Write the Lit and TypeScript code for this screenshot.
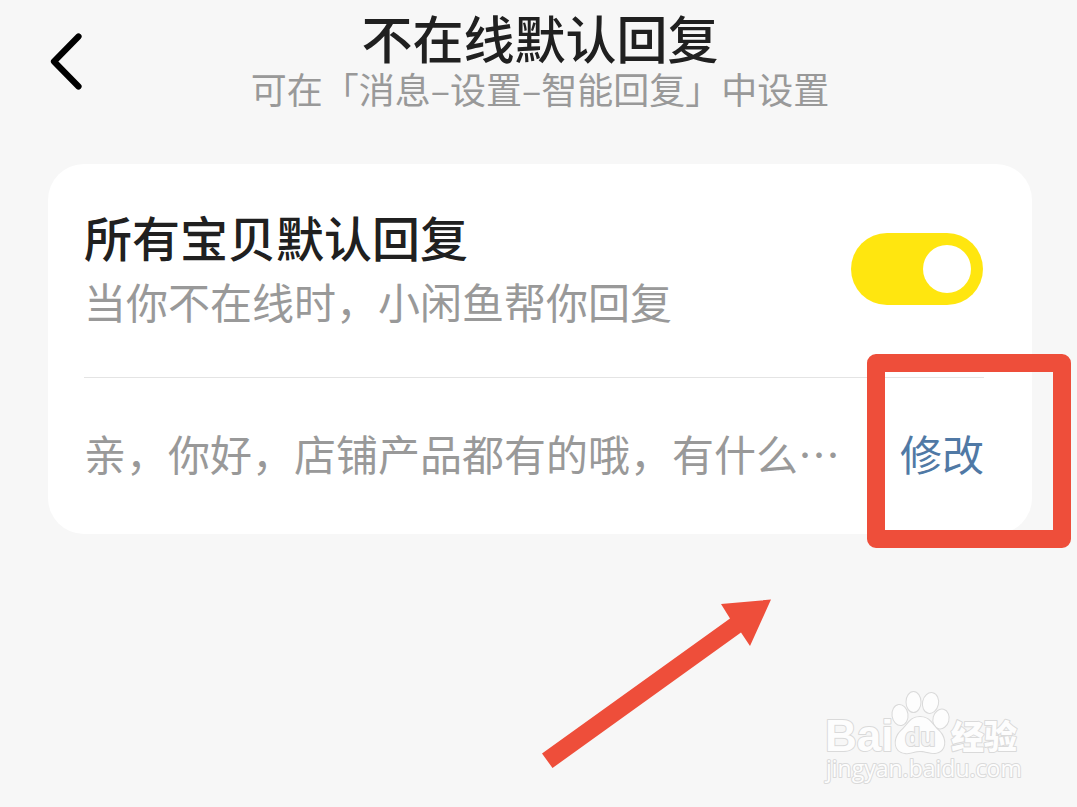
import { LitElement, html, css } from "lit";
import { customElement, state } from "lit/decorators.js";

@customElement("app-root")
export class AppRoot extends LitElement {
  static styles = css`
    :host {
      display: block;
      position: relative;
      box-sizing: border-box;
      min-height: 100vh;
      overflow: hidden;
      background: #f7f7f7;
      color: #202020;
      font-family: "Noto Sans CJK SC", sans-serif;
    }
    h1, h2, p { margin: 0; font-weight: 400; }
    button {
      border: 0;
      padding: 0;
      background: none;
      font: inherit;
      color: inherit;
      cursor: pointer;
    }
    .header {
      display: grid;
      grid-template-columns: 1fr auto 1fr;
      align-items: center;
      padding: 7px 45px 0 48px;
    }
    .back { justify-self: start; display: flex; padding-top: 6px; }
    .heading { text-align: center; white-space: nowrap; }
    .title { font-size: 51px; line-height: 60px; font-weight: 500; }
    .subtitle { font-size: 36px; line-height: 42px; color: #999; }
    .card {
      margin: 55px 45px 0 48px;
      padding: 0 48px 0 36px;
      border-radius: 36px;
      background: #fff;
    }
    .row { display: flex; align-items: center; justify-content: space-between; }
    .setting { padding: 40px 0 43px; border-bottom: 1px solid #e4e4e4; }
    .name { display: block; font-size: 48px; line-height: 64px; font-weight: 500; }
    .hint { font-size: 42px; line-height: 66px; color: #999; }
    .switch {
      appearance: none;
      display: flex;
      align-items: center;
      box-sizing: border-box;
      flex: none;
      width: 132px;
      height: 72px;
      margin: 0 1px 0 0;
      padding: 0 12px;
      border-radius: 36px;
      background: #ddd;
      cursor: pointer;
    }
    .switch::before {
      content: "";
      width: 48px;
      height: 48px;
      border-radius: 50%;
      background: #fff;
    }
    .switch:checked { justify-content: flex-end; background: #ffe60f; }
    .reply { padding: 43px 0 49px; font-size: 42px; line-height: 64px; }
    .message {
      min-width: 0;
      overflow: hidden;
      white-space: nowrap;
      color: #999;
    }
    .edit { position: relative; flex: none; color: #5079a5; }
    .frame {
      position: absolute;
      inset: -67px -87px -63px -33px;
      border: 18px solid #ee4e3a;
      border-radius: 9px;
      pointer-events: none;
    }
    .arrow { position: absolute; top: 598px; right: 305px; pointer-events: none; }
    .mark { position: absolute; top: 684px; right: 51px; pointer-events: none; }
    .ink {
      fill: #fdfdfd;
      stroke: #dadada;
      stroke-width: 2px;
      paint-order: stroke;
      stroke-linejoin: round;
    }
    .latin { font: 700 44px "Liberation Sans", sans-serif; }
    .han { font: 900 33px "Noto Sans CJK SC", sans-serif; }
    .du { font: 700 25px "Liberation Sans", sans-serif; fill: #f4f4f4; }
    .site { font: 400 23px "Open Sans", sans-serif; }
  `;

  @state() private enabled = true;

  private toggle(e: Event) {
    this.enabled = (e.target as HTMLInputElement).checked;
  }

  render() {
    return html`
      <header class="header">
        <button class="back" aria-label="返回">
          <svg width="36" height="60" viewBox="0 0 36 60" fill="none" stroke="#000"
            stroke-width="6.2" stroke-linecap="round" stroke-linejoin="round">
            <path d="M30.500 5.500 L6 30.500 L30.500 55.500" />
          </svg>
        </button>
        <div class="heading">
          <h1 class="title">不在线默认回复</h1>
          <p class="subtitle">可在「消息–设置–智能回复」中设置</p>
        </div>
      </header>

      <main class="card" lang="zh-CN">
        <section class="row setting">
          <div>
            <label class="name" for="auto">所有宝贝默认回复</label>
            <p class="hint">当你不在线时，小闲鱼帮你回复</p>
          </div>
          <input class="switch" id="auto" type="checkbox" role="switch"
            .checked=${this.enabled} @change=${this.toggle} />
        </section>
        <section class="row reply">
          <p class="message">亲，你好，店铺产品都有的哦，有什么…</p>
          <button class="edit">修改<span class="frame"></span></button>
        </section>
      </main>

      <svg class="arrow" width="232" height="172" viewBox="0 0 232 172" aria-hidden="true">
        <path fill="#ee4e3a" d="M231 1.5 L181 6 L190 20.5 L2 155.5 L12.5 170 L201 34.5 L210 48 Z" />
      </svg>

      <svg class="mark" width="206" height="104" viewBox="0 0 206 104">
        <text class="ink latin" x="5" y="67">Bai</text>
        <g class="ink">
          <ellipse cx="80" cy="31" rx="7.5" ry="10" transform="rotate(-8 80 31)" />
          <ellipse cx="93.5" cy="18" rx="7" ry="10" />
          <ellipse cx="110.5" cy="19" rx="7.5" ry="10" transform="rotate(12 110.5 19)" />
          <ellipse cx="121" cy="35" rx="7.5" ry="9.5" transform="rotate(15 121 35)" />
          <path d="M100 33 C110 33 112 41 119 47 C127 55 126 68 115 69 C108 69 106 67 100 67 C94 67 91 70 85 69 C74 68 73 55 81 47 C88 41 90 33 100 33 Z" />
        </g>
        <text class="ink du" x="85" y="62">du</text>
        <text class="ink han" x="131" y="65">经验</text>
        <text class="ink site" x="6" y="93">jingyan.baidu.com</text>
      </svg>
    `;
  }
}
